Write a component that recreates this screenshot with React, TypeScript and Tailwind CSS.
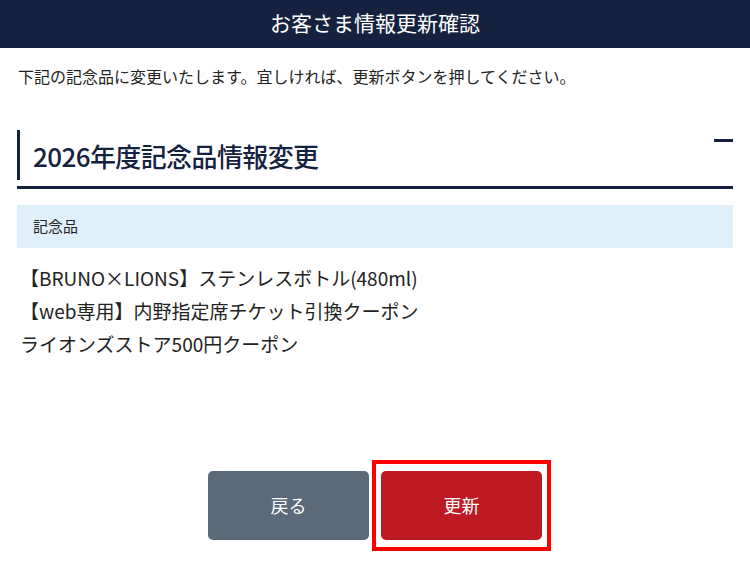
import React from "react";

export default function App() {
  const font = { fontFamily: '"Noto Sans CJK JP", "Noto Sans", sans-serif' };
  return (
    <div className="w-[750px] h-[580px] bg-white overflow-hidden" style={font}>
      <div className="h-[48px] bg-[#15223f] flex items-center justify-center text-white text-[21px] pb-[3px]">
        お客さま情報更新確認
      </div>
      <div className="px-[17px]">
        <p className="mt-[16px] text-[16px] leading-[24px] text-[#222] pl-[1px]">
          下記の記念品に変更いたします。宜しければ、更新ボタンを押してください。
        </p>
        <div className="mt-[42px] relative border-b-[3px] border-[#15223f] pb-[6px]">
          <div className="border-l-[3px] border-[#15223f] h-[50px] flex items-center pl-[13px] text-[26px] text-[#15223f] font-medium tracking-[-0.6px]">
            2026年度記念品情報変更
          </div>
          <div className="absolute right-0 top-[9px] w-[19px] h-[3px] bg-[#15223f]" />
        </div>
        <div className="mt-[16px] h-[43px] bg-[#dff0fb] flex items-center pl-[16px] text-[15px] text-[#222]">
          記念品
        </div>
        <div className="mt-[13px] pl-[3px] text-[19px] leading-[33px] text-[#222]">
          <div>【BRUNO×LIONS】ステンレスボトル(480ml)</div>
          <div>【web専用】内野指定席チケット引換クーポン</div>
          <div>ライオンズストア500円クーポン</div>
        </div>
      </div>
      <div className="mt-[111px] flex justify-center gap-[12px]">
        <button className="w-[161px] h-[69px] rounded-[5px] bg-[#5a6a7a] text-white text-[18px]">
          戻る
        </button>
        <div className="relative">
          <button className="w-[161px] h-[69px] rounded-[5px] bg-[#bd1a24] text-white text-[18px]">
            更新
          </button>
          <div className="absolute left-[-9px] right-[-9px] top-[-11px] bottom-[-11px] border-[4px] border-[#ff0000]" />
        </div>
      </div>
    </div>
  );
}
